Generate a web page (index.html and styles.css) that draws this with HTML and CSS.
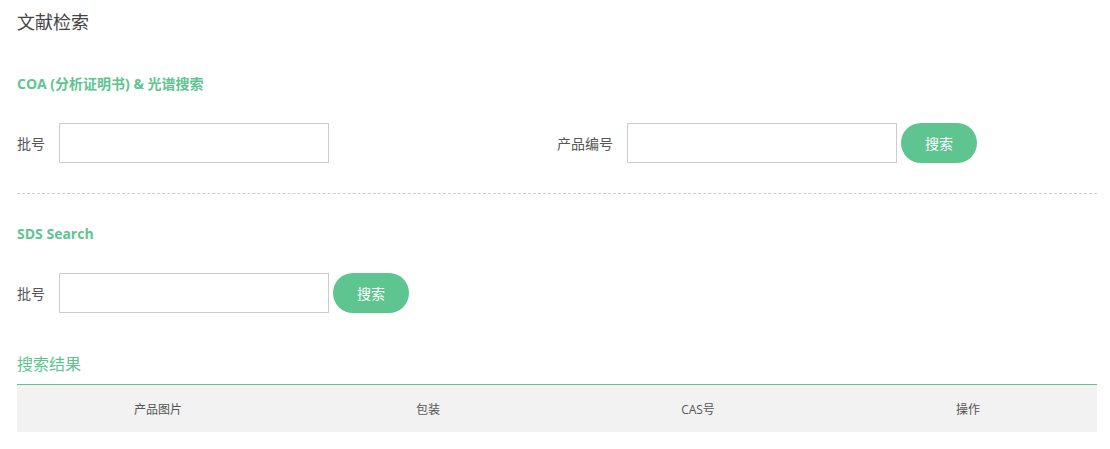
FILE: index.html
```html
<!DOCTYPE html>
<html lang="zh-CN">
<head>
<meta charset="utf-8">
<title>文献检索</title>
<link rel="stylesheet" href="styles.css">
</head>
<body>
<div class="page">
  <h1 class="page-title">文献检索</h1>

  <section class="search-section">
    <h2 class="section-title">COA (分析证明书) &amp; 光谱搜索</h2>
    <div class="form-row">
      <div class="field half">
        <label class="field-label">批号</label>
        <input class="field-input" type="text">
      </div>
      <div class="field half">
        <label class="field-label">产品编号</label>
        <input class="field-input" type="text">
        <button class="btn">搜索</button>
      </div>
    </div>
  </section>

  <div class="divider"></div>

  <section class="search-section">
    <h2 class="section-title">SDS Search</h2>
    <div class="form-row">
      <div class="field">
        <label class="field-label">批号</label>
        <input class="field-input" type="text">
        <button class="btn">搜索</button>
      </div>
    </div>
  </section>

  <h3 class="results-title">搜索结果</h3>
  <table class="results-table">
    <thead>
      <tr>
        <th>产品图片</th>
        <th>包装</th>
        <th>CAS号</th>
        <th>操作</th>
      </tr>
    </thead>
  </table>
</div>
</body>
</html>
```

FILE: styles.css
```css
* { box-sizing: border-box; }

body {
  margin: 0;
  background: #fff;
  font-family: "Open Sans", "Noto Sans CJK SC", sans-serif;
  color: #555;
}

.page {
  width: 1080px;
  margin-left: 17px;
}

.page-title {
  margin: 0;
  padding-top: 10px;
  font-size: 18px;
  line-height: 24px;
  font-weight: normal;
  color: #444;
}

.search-section {
  padding-top: 40px;
}

.divider + .search-section {
  padding-top: 30px;
}

.section-title {
  margin: 0;
  font-size: 14px;
  line-height: 20px;
  font-weight: bold;
  color: #5ec490;
}

.form-row {
  display: flex;
  margin-top: 29px;
}

.field {
  display: flex;
  align-items: center;
}

.field.half {
  width: 540px;
}

.field-label {
  font-size: 14px;
  color: #555;
  margin-right: 14px;
}

.field-input {
  width: 270px;
  height: 40px;
  border: 1px solid #ccc;
  border-radius: 0;
  padding: 0 8px;
  outline: none;
  font: inherit;
}

.btn {
  margin-left: 4px;
  width: 76px;
  height: 40px;
  border: none;
  border-radius: 20px;
  background: #5ec490;
  color: #fff;
  font-family: "Open Sans", "Noto Sans CJK SC", sans-serif;
  font-size: 14px;
  cursor: pointer;
}

.divider {
  margin-top: 30px;
  border-top: 1px dashed #ccc;
}

.results-title {
  margin: 40px 0 0;
  font-size: 16px;
  line-height: 22px;
  font-weight: normal;
  color: #5ec490;
  padding-bottom: 9px;
  border-bottom: 1px solid #5ec490;
}

.results-table {
  width: 100%;
  border-collapse: collapse;
  table-layout: fixed;
}

.results-table th {
  background: #f2f2f2;
  height: 47px;
  padding: 0 0 0 12px;
  font-size: 12px;
  font-weight: normal;
  color: #555;
  text-align: center;
}
```
